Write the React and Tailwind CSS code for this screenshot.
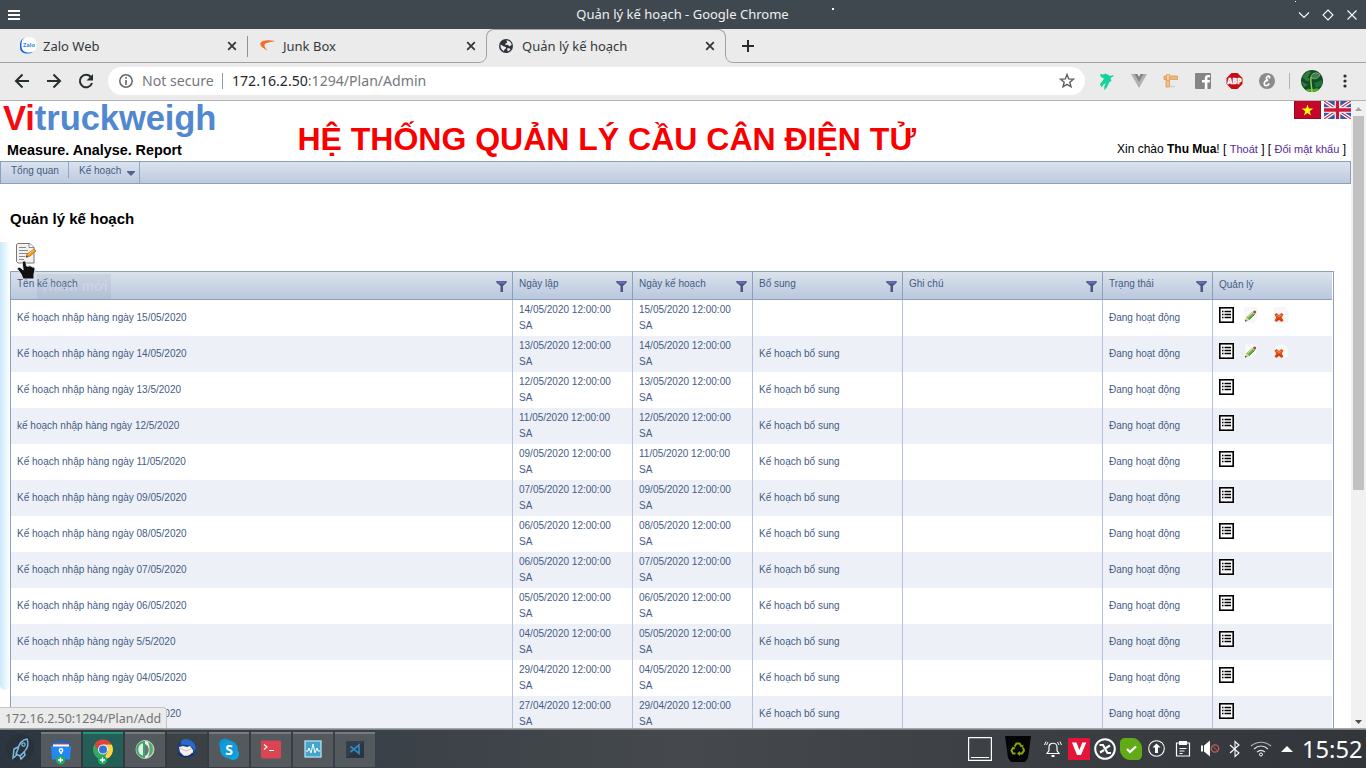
import React from "react";

const ROWS = [
  ["Kế hoạch nhập hàng ngày 15/05/2020", "14/05/2020", "15/05/2020", false],
  ["Kế hoạch nhập hàng ngày 14/05/2020", "13/05/2020", "14/05/2020", true],
  ["Kế hoạch nhập hàng ngày 13/5/2020", "12/05/2020", "13/05/2020", true],
  ["kế hoạch nhập hàng ngày 12/5/2020", "11/05/2020", "12/05/2020", true],
  ["Kế hoạch nhập hàng ngày 11/05/2020", "09/05/2020", "11/05/2020", true],
  ["Kế hoạch nhập hàng ngày 09/05/2020", "07/05/2020", "09/05/2020", true],
  ["Kế hoạch nhập hàng ngày 08/05/2020", "06/05/2020", "08/05/2020", true],
  ["Kế hoạch nhập hàng ngày 07/05/2020", "06/05/2020", "07/05/2020", true],
  ["Kế hoạch nhập hàng ngày 06/05/2020", "05/05/2020", "06/05/2020", true],
  ["Kế hoạch nhập hàng ngày 5/5/2020", "04/05/2020", "05/05/2020", true],
  ["Kế hoạch nhập hàng ngày 04/05/2020", "29/04/2020", "04/05/2020", true],
  ["Kế hoạch nhập hàng ngày 29/4/2020", "27/04/2020", "29/04/2020", true],
];

const GRID = "grid grid-cols-[502px_120px_120px_150px_200px_110px_119px]";

function Svg({ w, h, box, className = "", children }) {
  return (
    <svg width={w} height={h} viewBox={box || `0 0 ${w} ${h}`} fill="none" className={`block shrink-0 ${className}`}>
      {children}
    </svg>
  );
}

function Cross({ className = "" }) {
  return (
    <Svg w={10} h={10} className={className}>
      <path d="M1.200 1.200 8.800 8.800M8.800 1.200 1.200 8.800" stroke="#33383c" strokeWidth="1.800" />
    </Svg>
  );
}

function TitleBar() {
  return (
    <div className="relative flex h-[29px] items-center justify-between bg-[#3f484f] pl-2 pr-2">
      <div className="flex w-[60px]">
        <Svg w={12} h={10}><path d="M0 1h12M0 5h12M0 9h12" stroke="#fcfcfc" strokeWidth="2" /></Svg>
      </div>
      <div className="whitespace-nowrap pr-px text-[13px] text-[#eff0f1]">Quản lý kế hoạch - Google Chrome</div>
      <div className="flex items-center gap-3">
        <Svg w={12} h={12}><path d="m1 3.500 5 5 5-5" stroke="#fcfcfc" strokeWidth="1.100" /></Svg>
        <Svg w={12} h={12}><path d="m6 1 5 5-5 5-5-5Z" stroke="#fcfcfc" strokeWidth="1.100" /></Svg>
        <Svg w={12} h={12}><path d="m1.500 1.500 9 9m0-9-9 9" stroke="#fcfcfc" strokeWidth="1.100" /></Svg>
      </div>
      <span className="absolute left-[832px] top-2 h-0.5 w-0.5 bg-white" />
      <span className="absolute left-[1295px] top-px h-px w-px bg-white" />
    </div>
  );
}

function TabStrip() {
  return (
    <div className="flex h-[34px] bg-[#ebebeb] text-[13px] text-[#33383c]">
      <div className="flex w-[478px] items-center border-b border-[#a2a2a2] pl-[19px] pt-px">
        <Svg w={18} h={18}>
          <rect x="1" y="1" width="15" height="15.500" rx="6" fill="#1664e8" />
          <rect x="2.500" y=".300" width="15" height="15.200" rx="6" fill="#fff" />
          <text x="4" y="10" fontSize="5.800" fontWeight="700" fill="#3a84ee" fontFamily="Noto Sans">Zalo</text>
        </Svg>
        <span className="ml-[6px] w-[184px] pt-0.5">Zalo Web</span>
        <Cross />
        <span className="ml-[10px] h-[21px] w-px bg-[#8f9294]" />
        <Svg w={15} h={12} className="ml-3">
          <path d="M15 1C8-.5 1 .5.3 3.700c-.4 2.400 3.500 5 7.800 7.200C5 8 3.600 5.500 5 4c1.300-1.500 5.500-1.800 10-3Z" fill="#f36d25" />
        </Svg>
        <span className="ml-2 w-[183px] pt-0.5">Junk Box</span>
        <Cross />
      </div>
      <div className="flex w-2 shrink-0 items-end"><Svg w={9} h={9} className="-mr-px"><path d="M0 8.500C5 8.500 8.500 6 8.500 0" stroke="#a2a2a2" /></Svg></div>
      <div className="mb-2 flex w-[240px] shrink-0 items-center rounded-t-[8px] border-x border-t border-[#a2a2a2] pl-3 pt-[7px]">
        <Svg w={14} h={14} box="0 0 16 16">
          <circle cx="8" cy="8" r="8" fill="#30343a" />
          <path d="M8.500 1.500c3.500.3 5.700 2.300 6 5.400l-2.600 1.300-2.100-1.600-2.300.3-.3-1.500 2.100-1.200ZM1.700 6.300l4 2.200 2.300.6-.2 2-1.700 1-.4 2C3.200 12.900 1.300 10 1.700 6.300Zm8 4 2.500.5 1 1.200-2.500 1.900-1.300-.9Z" fill="#ebebeb" />
        </Svg>
        <span className="ml-[9px] w-[183px] pt-px">Quản lý kế hoạch</span>
        <Cross />
      </div>
      <div className="flex flex-1 items-end">
        <Svg w={8} h={9} className="-ml-px"><path d="M.500 0C.500 6 4 8.500 9 8.500" stroke="#a2a2a2" /></Svg>
        <div className="flex h-[34px] flex-1 items-center border-b border-[#a2a2a2] pl-[9px]">
          <Svg w={12} h={12}><path d="M6 0v12M0 6h12" stroke="#282d31" strokeWidth="2" /></Svg>
        </div>
      </div>
    </div>
  );
}

function Toolbar() {
  return (
    <div className="flex h-[38px] items-center border-b border-[#b4b4b4] bg-[#ebebeb] pb-px pl-[14px]">
      <Svg w={16} h={16}><path d="M15 8H2m6.500-6.500L2 8l6.500 6.500" stroke="#282d31" strokeWidth="2" /></Svg>
      <Svg w={16} h={16} className="ml-4"><path d="M1 8h13M7.500 1.500 14 8l-6.500 6.500" stroke="#282d31" strokeWidth="2" /></Svg>
      <Svg w={16} h={16} className="ml-4"><path d="M12.800 4A6.200 6.200 0 1 0 14 10" stroke="#282d31" strokeWidth="2" /><path d="M15 1v6.500H8.500Z" fill="#282d31" /></Svg>
      <div className="ml-[14px] flex h-7 w-[977px] items-center rounded-full bg-white pl-[11px] pr-[10px] text-[14.100px]">
        <Svg w={14} h={14}><circle cx="7" cy="7" r="6.200" stroke="#666" strokeWidth="1.500" /><path d="M7 6v5M7 3v1.700" stroke="#666" strokeWidth="1.600" /></Svg>
        <span className="ml-[9px] w-[73px] whitespace-nowrap pb-px text-[#75787b]">Not secure</span>
        <span className="ml-[7px] h-4 w-px bg-[#999]" />
        <span className="ml-[9px] flex-1 whitespace-nowrap pb-px text-[#75787b]"><span className="text-[#25292d]">172.16.2.50</span>:1294/Plan/Admin</span>
        <Svg w={16} h={16}><path d="m8 1.500 1.700 4.400 4.700.3-3.600 3 1.200 4.600L8 11.300l-4 2.500 1.200-4.600-3.600-3 4.700-.3Z" stroke="#5c5f63" strokeWidth="1.400" /></Svg>
      </div>
      <Svg w={16} h={18} className="ml-[14px]">
        <path d="m1 2 4 .500 1-1 2.500 1L11 4l4-1-1 1.500-2.500 1.500 1 3-2 1-1.500 3-1.500 3-2.500 2 .500-4 1.500-3-2.500 1.500-2 3L1 12l2.500-3L5 6.500 2 5Z" fill="#12d3a0" />
      </Svg>
      <Svg w={16} h={14} className="ml-4"><path d="M0 0h4l4 7 4-7h4L8 14Z" fill="#b0b0b0" /><path d="M3.500 0h3L8 3l1.500-3h3L8 8Z" fill="#828282" /></Svg>
      <Svg w={16} h={16} className="ml-4">
        <path d="M7 13.500h5" stroke="#cfcfcf" strokeWidth="1.500" />
        <path d="M3 3h3.500v11H3Z" fill="#efc18b" stroke="#dc9b58" strokeWidth=".800" /><path d="M1 3h13.500v3.500H1Z" fill="#efb779" stroke="#dc9b58" strokeWidth=".800" /><path d="M3.500 1.500h3v6h-3Z" fill="#f5cf9e" stroke="#dc9b58" strokeWidth=".700" />
      </Svg>
      <Svg w={16} h={16} className="ml-4"><rect width="16" height="16" rx="1" fill="#858585" /><path d="M9.800 16V9.500H7V7h2.800V5.200C9.800 3 11 2 13 2h2v2.300h-1.300c-1 0-1.300.5-1.300 1.300V7H15l-.300 2.500h-2.300V16Z" fill="#fff" /></Svg>
      <Svg w={17} h={16} className="ml-[15px]"><path d="M5.500 0h6l5 5v6l-5 5h-6l-5-5V5Z" fill="#c70d12" /><text x="8.500" y="11.200" textAnchor="middle" fontFamily="Open Sans" fontWeight="800" fontSize="8" textLength="14.500" lengthAdjust="spacingAndGlyphs" stroke="#fff" strokeWidth=".300" fill="#fff">ABP</text></Svg>
      <Svg w={16} h={16} className="ml-4"><circle cx="8" cy="8" r="8" fill="#8b8b8b" /><path d="M10.300 5.500c1.200-2.800-1.600-3.200-2.600-1.200-.8 1.700 0 3.100 1.500 3.100C6.700 7.300 5 9 5.300 11c.4 2.400 3.600 2.200 5-.5" stroke="#fff" strokeWidth="1.700" /></Svg>
      <span className="ml-[14px] h-4 w-px bg-[#b3b3b3]" />
      <Svg w={22} h={22} className="ml-[11px]">
        <clipPath id="avatar"><circle cx="11" cy="11" r="11" /></clipPath>
        <g clipPath="url(#avatar)">
          <rect width="22" height="22" fill="#154b26" />
          <path d="M1 7 7 1l3 1-5 8ZM0 11l7 4-4 2Z" fill="#2e7c3d" />
          <path d="m13 13 8-3v5l-6 3Z" fill="#20733a" />
          <path d="M5 20c2-2 3-1 6-1s5-1 7 0l-2 4H7Z" fill="#4eae26" />
          <path d="M10 6c2-4 7-4 9-1-1 3-6 5-8 3Z" fill="#417f50" stroke="#83b78b" strokeWidth=".800" />
          <path d="M9 9C6 7 4 8 4 10c2 2 4 1 5-1Z" fill="#347f3c" />
          <path d="M11 22c0-6-2-9-1-15" stroke="#8bd95c" strokeWidth="1.400" />
        </g>
      </Svg>
      <Svg w={4} h={14} className="ml-5"><circle cx="2" cy="2" r="1.600" fill="#282d31" /><circle cx="2" cy="7" r="1.600" fill="#282d31" /><circle cx="2" cy="12" r="1.600" fill="#282d31" /></Svg>
    </div>
  );
}

function Flags() {
  return (
    <div className="flex gap-[3px]">
      <Svg w={27} h={18}><path d="M0 0h27v18H0Z" fill="#c5062b" /><path d="M0 17.500h27M26.500 0v18M.500 0v18" stroke="#8d0f28" /><path d="m13.500 3.500 1.300 4.100h4.500l-3.600 2.600 1.300 4.300-3.500-2.600-3.600 2.600 1.400-4.300-3.600-2.600h4.400Z" fill="#ff0" /></Svg>
      <Svg w={27} h={18}>
        <path d="M0 0h27v18H0Z" fill="#3558aa" />
        <path d="m0 0 27 18M27 0 0 18" stroke="#fff" strokeWidth="3.600" />
        <path d="m0 0 27 18M27 0 0 18" stroke="#d3304b" strokeWidth="1.200" />
        <path d="M13.500 0v18M0 9h27" stroke="#fff" strokeWidth="5.600" />
        <path d="M13.500 0v18M0 9h27" stroke="#cb1737" strokeWidth="3.300" />
      </Svg>
    </div>
  );
}

function Banner() {
  return (
    <div className="flex h-[60px] justify-between font-['Liberation_Sans',sans-serif]">
      <div className="w-[297px] pl-[3px]">
        <div className="h-[38px] whitespace-nowrap text-[34.600px] font-bold leading-[35px] tracking-[-0.100px] text-[#5288d0]"><span className="text-[#f30b10]">Vi</span>truckweigh</div>
        <div className="pl-[4px] text-[14.350px] font-bold leading-[22px] text-black">Measure. Analyse. Report</div>
      </div>
      <h1 className="flex-1 whitespace-nowrap pl-[0.400px] pt-[20px] text-[32px] font-bold leading-[37px] text-[#f80000]">HỆ THỐNG QUẢN LÝ CẦU CÂN ĐIỆN TỬ</h1>
      <div className="flex flex-col items-end">
        <Flags />
        <div className="mt-[22px] whitespace-nowrap pr-[5px] text-[12px] leading-4 text-black">Xin chào <b>Thu Mua</b>! [ <span className="text-[11px] text-[#56299b]">Thoát</span> ] [ <span className="text-[11px] text-[#56299b]">Đổi mật khẩu</span> ]</div>
      </div>
    </div>
  );
}

function Menu() {
  return (
    <div className="flex h-[23px] items-start border border-[#8ba0bd] bg-linear-to-b from-[#dae2ee] to-[#bdcadf] text-[10px] text-[#465c84]">
      <span className="ml-[10px] w-[57px] whitespace-nowrap leading-[17px]">Tổng quan</span>
      <span className="h-4 w-px bg-[#94a8c5]" />
      <span className="ml-[10px] w-[48px] whitespace-nowrap leading-[17px]">Kế hoạch</span>
      <Svg w={8} h={5} className="mt-[9px]"><path d="M0 0h8v1L4 5 0 1Z" fill="#526294" /></Svg>
      <span className="ml-1 h-[21px] w-px bg-[#94a8c5]" />
    </div>
  );
}

function Filter() {
  return <Svg w={11} h={12} className="mt-[8px]"><path d="M.300 1h10.400v1.500L7 6V12H4.500V6L.300 2.500Z" fill="#4c5584" /><path d="M1 1.500h9L8 3.500H3Z" fill="#6874bc" /></Svg>;
}

function HeaderCell({ children, last }) {
  return (
    <div className={last ? "flex pl-[6px] pt-px" : "flex justify-between border-r border-[#8ba0bd] pl-[6px] pr-[5px]"}>
      <span className="leading-[23px]">{children}</span>
      {!last && <Filter />}
    </div>
  );
}

function ListIcon() {
  return <Svg w={15} h={16}><rect x=".800" y=".800" width="13.400" height="14.400" fill="#fff" stroke="#000" strokeWidth="1.600" /><path d="M3 4.500h1.500m1 0H12m-9 3h1.500m1 0H12m-9 3h1.500m1 0H12" stroke="#000" strokeWidth="1.300" /></Svg>;
}

function EditIcon() {
  return (
    <Svg w={14} h={16}>
      <path d="M1 1h12v9l-3 5H1Z" fill="#f9f9f8" stroke="#ececec" strokeWidth=".600" />
      <path d="m1 14.500 1.500-4.500L8 5l2.500 2.500L5 13Z" fill="#73b34a" /><path d="m3.500 10 5.500-5" stroke="#c3dfa4" strokeWidth="1.200" /><path d="m5 12.500 6-5.500" stroke="#427f2a" />
      <path d="m1 14.500 1.500-4.500L5 12.500Z" fill="#e8cf91" /><path d="m8 5 1.500-1 2 2-1 1.500Z" fill="#d5d5ca" /><circle cx="10.700" cy="5" r="1.500" fill="#a04f49" /><path d="m1 14.500.500-1.800L3 14Z" fill="#333" />
    </Svg>
  );
}

function DeleteIcon() {
  return <Svg w={15} h={16}><path d="M1 1h10l3 4v10H1Z" fill="#f9f9f9" stroke="#e8e8e8" strokeWidth=".600" /><path d="m.500 7.500 2-1.500L5 8l2.500-2 2 1.500-1.800 3 1.800 3-2 1.500L5 13l-2.500 2-2-1.500 1.700-3Z" fill="#e04c18" /><path d="m2.500 8 2.500 1.500L7.500 8" stroke="#f69a55" /><path d="m2 13.500 3-2 3 2" stroke="#c23910" /></Svg>;
}

function Row({ row, index }) {
  const cell = "flex items-center border-r border-[#b6c2dc] pl-[6px]";
  return (
    <div className={`${GRID} h-9 shrink-0 leading-4 ${index % 2 ? "bg-[#edf1f7]" : "bg-white"}`}>
      <div className={cell}>{row[0]}</div>
      <div className={cell}><span>{row[1]} 12:00:00<br />SA</span></div>
      <div className={cell}><span>{row[2]} 12:00:00<br />SA</span></div>
      <div className={cell}>{row[3] ? "Kế hoạch bổ sung" : ""}</div>
      <div className={cell} />
      <div className={cell}>Đang hoạt động</div>
      <div className="flex items-start pl-[6px] pt-[7px]">
        <ListIcon />
        {index < 2 && <><span className="ml-[10px]"><EditIcon /></span><span className="ml-4"><DeleteIcon /></span></>}
      </div>
    </div>
  );
}

function Page() {
  return (
    <div className="relative flex h-[627px] shrink-0 overflow-hidden bg-white font-['Liberation_Sans',sans-serif]">
      <div className="flex w-[1351px] flex-col">
        <Banner />
        <Menu />
        <h2 className="mt-[26px] pl-[10px] text-[15px] font-bold leading-[18px] text-black">Quản lý kế hoạch</h2>
        <div className="mt-[14px] flex flex-1">
          <div className="flex w-[10px] shrink-0 flex-col"><div className="h-[448px] rounded-b-lg bg-linear-to-r from-[#c8e9f9] to-white" /></div>
          <div className="flex w-[1324px] flex-col">
            <div className="h-[29px] pl-[6px]">
              <Svg w={21} h={22}>
                <path d="M.500 2.500 2 1.500h12l4 4v15.500H2L.500 19.500Z" fill="#f2f2f2" stroke="#777" />
                <path d="M13 1.500v4h5" fill="#fff" stroke="#888" /><path d="M3 5.500h7M3 8.500h9M3 11.500h9M3 14.500h6M3 17.500h5" stroke="#8b8b8b" />
                <path d="m10 15 1-3 7-5 2 2-6.500 5.500Z" fill="#f39415" stroke="#a8661d" strokeWidth=".700" /><path d="m12 12.500 6-4.500" stroke="#ffd364" /><path d="m10 15.500.500-2 1.500 1.500Z" fill="#333" />
              </Svg>
            </div>
            <div className="flex h-[480px] flex-col border border-[#8ba0bd] pr-px text-[10px] text-[#465c84]">
              <div className={`${GRID} h-7 shrink-0 border-b border-[#8ba0bd] bg-linear-to-b from-[#dae2ec] to-[#bac8de]`}>
                <HeaderCell>Tên kế hoạch</HeaderCell><HeaderCell>Ngày lập</HeaderCell><HeaderCell>Ngày kế hoạch</HeaderCell><HeaderCell>Bổ sung</HeaderCell><HeaderCell>Ghi chú</HeaderCell><HeaderCell>Trạng thái</HeaderCell><HeaderCell last>Quản lý</HeaderCell>
              </div>
              {ROWS.map((row, i) => <Row row={row} index={i} key={row[0]} />)}
            </div>
          </div>
        </div>
      </div>
      <div className="flex w-[15px] flex-col items-center bg-[#f1f1f1]">
        <Svg w={7} h={4} className="mt-[6px]"><path d="M0 4h7L3.500 0Z" fill="#a3a3a3" /></Svg>
        <span className="mt-[5px] h-[374px] w-[11px] bg-[#c1c1c1]" />
        <Svg w={7} h={4} className="mt-[230px]"><path d="M0 0h7L3.500 4Z" fill="#505050" /></Svg>
      </div>
      <div className="absolute left-[37px] top-[173px] flex h-[25px] w-[74px] items-center justify-center bg-[#75879d]/12 text-[14px] font-bold text-white/20">Thêm mới</div>
      <svg className="absolute left-[16px] top-[158px]" width="20" height="21" viewBox="0 0 20 21" fill="none">
        <path d="M8 2c-1 0-2 1-1.800 2l1 7-2.200-2c-2-1.500-4 0-3.500 1.200L5 15l2 5h11v-5l1-4c0-2.500-1-3.500-3-3-1-1.300-2.500-1.500-4-.8L10.500 7 10 3.500C9.700 2.500 9 2 8 2Z" fill="#111" stroke="#e6e6e6" strokeWidth="1" />
      </svg>
      <div className="absolute left-0 top-[606px] flex h-[22px] w-[167px] items-center rounded-tr-[4px] border-r border-t border-[#c5c5c5] bg-[#ebebeb] pl-[5px] font-['Noto_Sans',sans-serif] text-[12.420px] text-[#717477]"><span className="pt-0.5">172.16.2.50:1294/Plan/Add</span></div>
    </div>
  );
}

function PlusBadge() {
  return <><circle cx="15.500" cy="26" r="4.600" fill="#21a865" /><path d="M15.500 23.500v5M13 26h5" stroke="#fff" strokeWidth="1.300" /></>;
}

function AppButton({ active, dim, children }) {
  return <div className={`flex h-[35px] w-10 justify-center border-t-2 ${active ? "border-[#219779] bg-[#235f56]" : dim ? "border-[#53585d] bg-[#3c4146]" : "border-[#777b7f] bg-[#54595e]"}`}><Svg w={32} h={32}>{children}</Svg></div>;
}

function Taskbar() {
  return (
    <div className="flex h-[40px] shrink-0 flex-col">
      <div className="h-0.5 shrink-0 bg-linear-to-b from-[#b5b6b7] to-[#73777a]" />
      <div className="flex h-[38px] items-start bg-linear-to-r from-[#2d3640] via-[#45494d] to-[#32363b] text-[#fcfcfc]">
      <div className="flex w-[41px] justify-center pt-[3px]">
        <Svg w={30} h={32}>
          <circle cx="14" cy="15" r="14" fill="#29323b" />
          <path d="M21 6c-5 1-8 5-9 10l-2 5 4 2 4-4c4-4 5-8 3-13ZM12 14l-4 2-1 9 5-4m6-3 1 4-4 4-1-3" stroke="#7dbbe0" strokeWidth="1.500" /><circle cx="17.500" cy="11.500" r="1.700" stroke="#7dbbe0" strokeWidth="1.200" />
        </Svg>
      </div>
      <div className="flex gap-0.5 pt-[2px]">
        <AppButton>
          <path d="M6 12h20l-1 13.500H7Z" fill="#2387f4" /><path d="M7 9c1-4 17-4 18 0v5H7Z" fill="#1e66b4" /><path d="M8 10h16v3H8Z" fill="#fff" /><path d="M8 10h16" stroke="#e3424a" /><path d="M6 13.500h20" stroke="#2387f4" strokeWidth="2" />
          <circle cx="16" cy="16.500" r="1.700" stroke="#fff" strokeWidth="1.400" /><path d="M16 18v2" stroke="#dcecff" strokeWidth="2" /><PlusBadge />
        </AppButton>
        <AppButton active>
          <path d="M7.340 10.500A10 10 0 0 1 24.660 10.500H16Z" fill="#e5423b" /><path d="M16 15.500 7.340 10.500A10 10 0 0 0 16 25.500L20.500 18Z" fill="#35a861" /><path d="M16 10.500h8.660A10 10 0 0 1 16 25.500l5-8Z" fill="#ffd447" /><path d="m7.340 10.500 5 7 3-7Z" fill="#e5423b" />
          <circle cx="16" cy="15.500" r="5" fill="#f6f6f6" /><circle cx="16" cy="15.500" r="4" fill="#3474da" /><PlusBadge />
        </AppButton>
        <AppButton><circle cx="16" cy="15.500" r="9" fill="#e6eae8" stroke="#bec5c2" /><path d="M15 8v15c-9-1-9-14 0-15Z" stroke="#35aa62" strokeWidth="2" /><path d="M19 8c4 1 5 4 5 7.500S22 22 19 23c2-4 2-11 0-15Z" fill="#55ae66" /><path d="M16 10v12c5-2 5-10 0-12Z" fill="#66757c" /></AppButton>
        <AppButton dim><circle cx="16" cy="14.500" r="9.500" fill="#153e91" /><path d="M10 7c6-5 14 0 15 7l-2 4-1-4c-3-3-7-4-12-3Z" fill="#2a68c2" /><path d="m8 13 4-1 4 1 3-1 3 4v3l-3 3h-6l-4-4Z" fill="#faeee8" /><path d="m9 14 6 3 5-2" stroke="#b8a8b4" strokeWidth=".700" /><path d="M7 19c4 5 11 5 15 0" stroke="#173268" strokeWidth="2" /></AppButton>
        <AppButton><circle cx="12" cy="10.500" r="6" fill="#0796d3" /><circle cx="20" cy="20" r="6" fill="#0aa8e5" /><circle cx="16" cy="15.500" r="9" fill="#119bd7" /><text x="16" y="20.500" textAnchor="middle" fontFamily="Noto Sans" fontWeight="700" fontSize="14" fill="#fff">S</text></AppButton>
        <AppButton><rect x="6" y="6.500" width="20" height="18" rx="1" fill="#da4453" /><path d="m9 10.500 3 2.500-3 2.500m5 1h5" stroke="#fff" strokeWidth="1.100" /></AppButton>
        <AppButton><rect x="8" y="7" width="16" height="16" fill="#43a5cf" stroke="#b6dfef" strokeWidth="1.300" /><path d="M9 17h2l1-3 2 5 2-9 2 9 2-5 1 3h2" stroke="#fff" /></AppButton>
        <AppButton><rect x="7" y="7" width="18" height="17" fill="#343e49" /><path d="M7 24h18V8Z" fill="#2c353f" /><path d="m11.500 12.500 8.500 7V11l-8.500 7" stroke="#2d87c3" strokeWidth="1.700" /></AppButton>
      </div>
      <div className="ml-auto flex h-[38px] items-center pb-px pr-[3px]">
        <Svg w={24} h={24}><path d="M.600.600h22.800v22.800H.600ZM3 20.500h18" stroke="#fcfcfc" strokeWidth="1.200" /></Svg>
        <Svg w={26} h={26} className="ml-[13px]"><path d="M0 0h26l-3 22-3 4H6l-3-4Z" fill="#050505" /><path d="m9.500 10.500 2-3h3l2 3m1.500 1 1 3-2 3h-2.500m-4 0H8l-1.500-3 2-3.500" stroke="#86a50d" strokeWidth="2" /><path d="m15 11 3 .500.500-3ZM15 15v5l-3-2.500ZM7 11l3.500.500L9 14Z" fill="#86a50d" /></Svg>
        <Svg w={18} h={18} className="ml-[13px]"><path d="M3 13.500h12l-2-3V7c0-5-8-5-8 0v3.500Z" stroke="#fcfcfc" strokeWidth="1.200" /><path d="M7.500 15h3v2h-3Z" fill="#fff" /><path d="M4 2 2.500 5m11-3 1.500 3M2 1.500.500 5M16 1.500 17.500 5" stroke="#fcfcfc" strokeWidth="1" /></Svg>
        <Svg w={22} h={22} className="ml-[6px]"><path d="M0 0h22v22H0Z" fill="#e51539" /><path d="M4 4.500h4.500l2.800 7.500 3-7.500h4l-5.300 12.500H9Z" fill="#fff" /></Svg>
        <Svg w={22} h={22} className="ml-1"><circle cx="11" cy="11" r="9.800" stroke="#fcfcfc" strokeWidth="2" /><path d="M5.500 7H9l4.500 8H17M16 7.500l-4 2.500M10 12l-4 2.500" stroke="#fcfcfc" strokeWidth="2.200" /></Svg>
        <Svg w={22} h={22} className="ml-1"><path d="M5 0h8c4 0 9 5 9 10v7c0 3-2 5-5 5h-7C5 22 0 17 0 12V5c0-3 2-5 5-5Z" fill="#62aa16" /><path d="m7 11 3 3 6-5.500" stroke="#fff" strokeWidth="2.200" /></Svg>
        <Svg w={17} h={17} className="ml-[6px]"><circle cx="8.500" cy="8.500" r="7.800" stroke="#fcfcfc" strokeWidth="1.100" /><path d="m8.500 3.500 4 4H10v5.500H7V7.500H4.500Z" fill="#fff" /></Svg>
        <Svg w={16} h={17} className="ml-[10px]"><path d="M1.500 3v13h13V3ZM4.500 8.500h7m-7 2.500h5m-5 2.500h3" stroke="#fcfcfc" strokeWidth="1.200" /><path d="M4 1h8v4H4Z" fill="#fff" /></Svg>
        <Svg w={19} h={17} className="ml-[10px]"><path d="M0 5.500h2v6H0ZM3 5.500l6-5v16l-6-5Z" fill="#fff" /><circle cx="14" cy="8.500" r="3.700" stroke="#c35a50" strokeWidth="1.300" /><path d="m11.500 6 5 5" stroke="#c35a50" /></Svg>
        <Svg w={12} h={18} className="ml-[9px]"><path d="m1 5 9 8-4 3.500V1.500L10 5l-9 8" stroke="#fcfcfc" strokeWidth="1.100" /></Svg>
        <Svg w={22} h={18} className="ml-[9px]"><path d="M1 6c6-5 14-5 20 0" stroke="#b5b5b5" strokeWidth="1.200" /><path d="M4 9c4-4 10-4 14 0M7 12c3-2.500 5-2.500 8 0" stroke="#ddd" strokeWidth="1.200" /><circle cx="11" cy="14.500" r="1.500" stroke="#fff" /></Svg>
        <Svg w={12} h={7} className="ml-[9px]"><path d="m0 7 6-6 6 6Z" fill="#fff" /></Svg>
        <span className="ml-[9px] w-[61px] whitespace-nowrap text-[23.700px] leading-8">15:52</span>
      </div>
      </div>
    </div>
  );
}

export default function App() {
  return (
    <main className="flex h-[768px] w-[1366px] flex-col overflow-hidden font-['Noto_Sans',sans-serif]">
      <TitleBar />
      <TabStrip />
      <Toolbar />
      <Page />
      <Taskbar />
    </main>
  );
}
